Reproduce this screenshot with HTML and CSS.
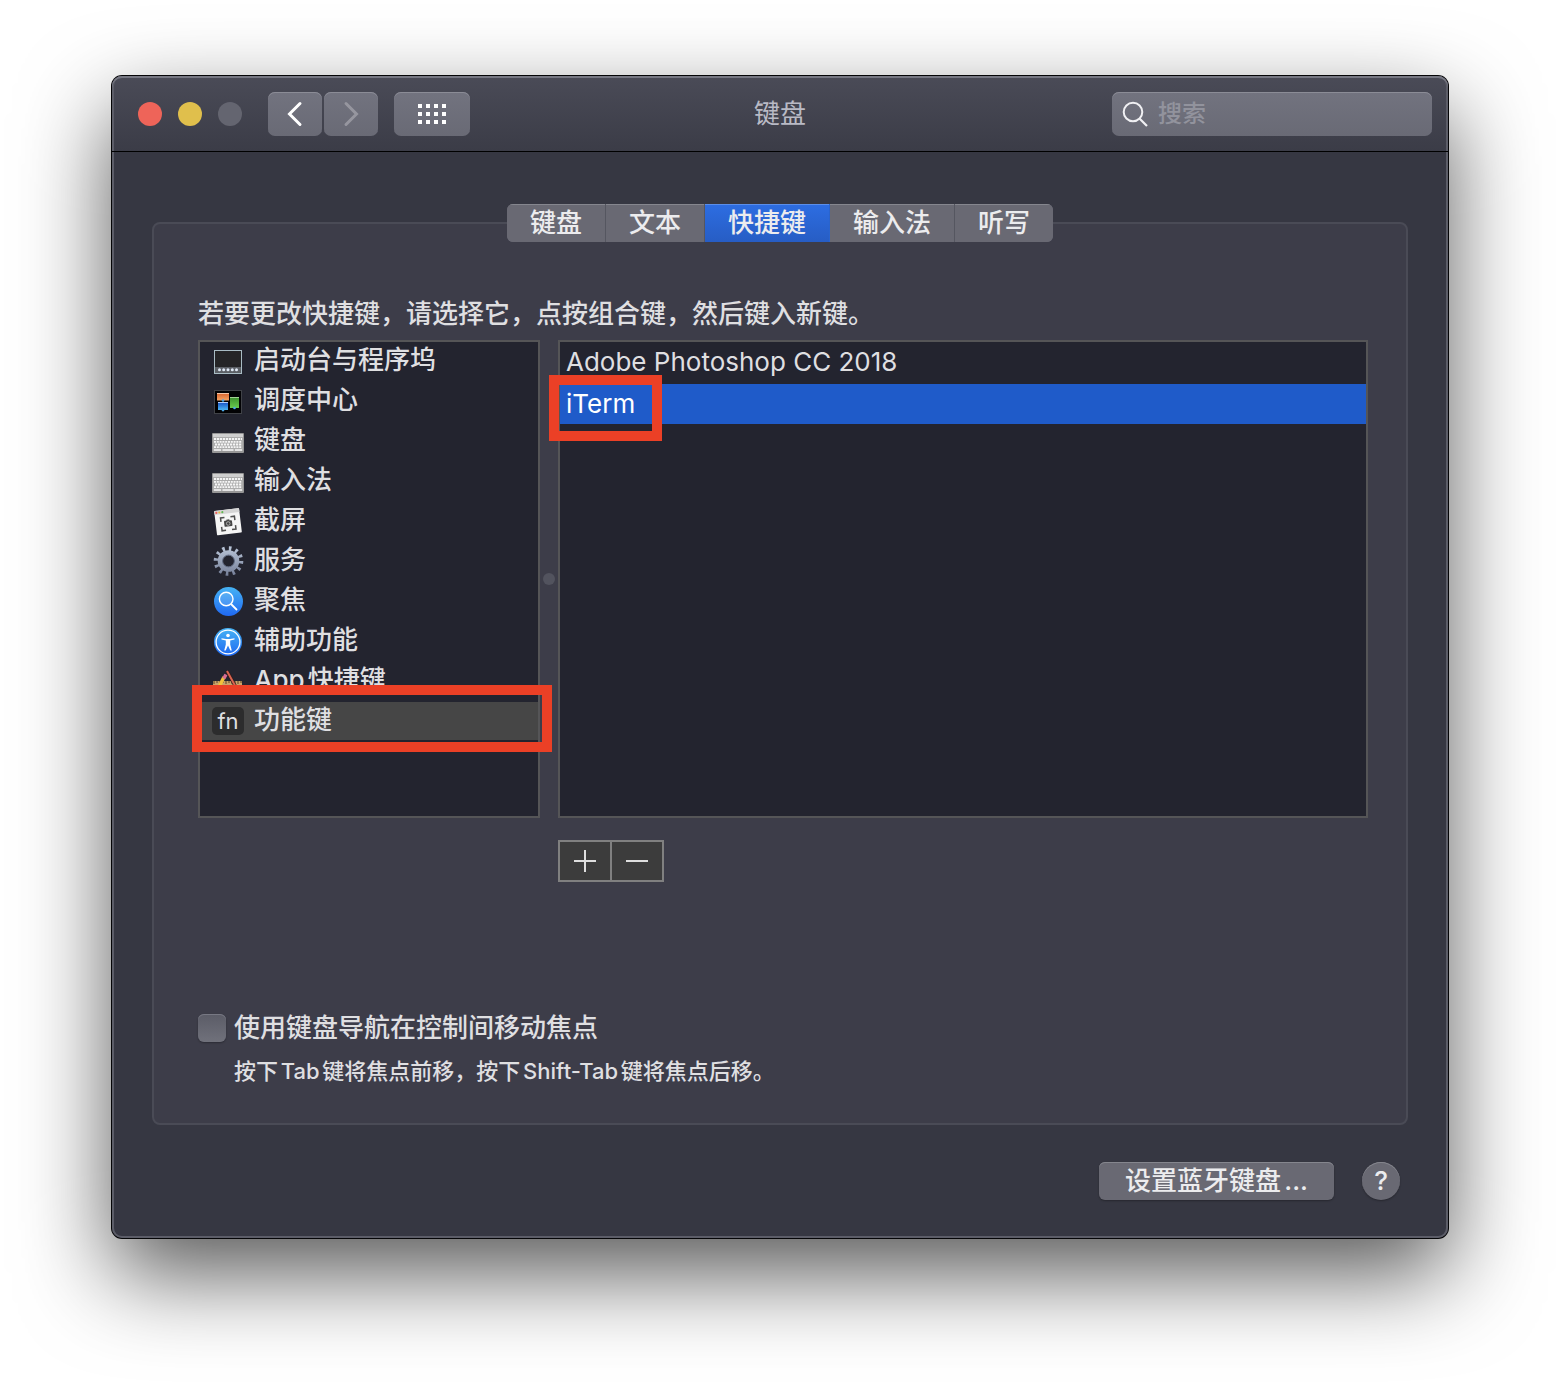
FILE: index.html
```html
<!DOCTYPE html>
<html lang="zh-CN">
<head>
<meta charset="utf-8">
<meta name="viewport" content="width=device-width, initial-scale=1">
<title>键盘</title>
<link rel="stylesheet" href="styles.css">
</head>
<body>
<main class="window">
  <header class="titlebar">
    <div class="titlebar-left">
      <div class="lights">
        <button class="light light-close" aria-label="关闭"></button>
        <button class="light light-min" aria-label="最小化"></button>
        <button class="light light-zoom" aria-label="缩放" disabled></button>
      </div>
      <div class="nav">
        <button class="tool" aria-label="后退"><svg width="54" height="44" viewBox="0 0 54 44"><path d="M32 11.500 21.500 22 32 32.500" fill="none" stroke="#fff" stroke-width="3" stroke-linecap="round"/></svg></button>
        <button class="tool" aria-label="前进" disabled><svg width="54" height="44" viewBox="0 0 54 44"><path d="M22 11.500 32.500 22 22 32.500" fill="none" stroke="#96969f" stroke-width="3" stroke-linecap="round"/></svg></button>
      </div>
      <button class="tool" aria-label="显示全部"><svg width="76" height="44" viewBox="0 0 76 44"><path d="M24 14H52M24 22H52M24 30H52" stroke="#fff" stroke-width="4" stroke-dasharray="4 4"/></svg></button>
    </div>
    <h1 class="title">键盘</h1>
    <label class="search">
      <svg width="28" height="28" viewBox="0 0 28 28"><circle cx="11" cy="12" r="9.300" fill="none" stroke="#f0f0f3" stroke-width="2"/><path d="M17.500 18.500 25 26" stroke="#f0f0f3" stroke-width="2.200"/></svg>
      <input type="search" placeholder="搜索" aria-label="搜索">
    </label>
  </header>

  <div class="content">
    <div class="tabs" role="tablist">
      <button class="tab" role="tab">键盘</button>
      <button class="tab" role="tab">文本</button>
      <button class="tab tab-active" role="tab" aria-selected="true">快捷键</button>
      <button class="tab" role="tab">输入法</button>
      <button class="tab" role="tab">听写</button>
    </div>

    <section class="panel">
      <p class="prompt">若要更改快捷键，请选择它，点按组合键，然后键入新键。</p>
      <div class="split">
        <ul class="list categories">
          <li><button class="row">
            <svg class="icon" viewBox="0 0 32 32"><rect x="2.500" y="5.500" width="27" height="23" fill="#252527" stroke="#a9bcc4"/><path d="M3 22h26v6H3z" fill="#5c6066"/><g fill="#dfe8f5"><circle cx="7.500" cy="24.700" r="1.500"/><circle cx="11.700" cy="24.700" r="1.500"/><circle cx="16" cy="24.700" r="1.500"/><circle cx="20.300" cy="24.700" r="1.500"/><circle cx="24.500" cy="24.700" r="1.500"/></g></svg>
            <span>启动台与程序坞</span></button></li>
          <li><button class="row">
            <svg class="icon" viewBox="0 0 32 32"><defs><linearGradient id="or" x2="0" y2="1"><stop stop-color="#d9622c"/><stop offset="1" stop-color="#f5a565"/></linearGradient><linearGradient id="gr" x2="0" y2="1"><stop stop-color="#3b8e2c"/><stop offset="1" stop-color="#68c74d"/></linearGradient><linearGradient id="bl" x2="0" y2="1"><stop stop-color="#174ec4"/><stop offset="1" stop-color="#4ab5f5"/></linearGradient></defs><rect x="2.500" y="5.500" width="27" height="23" fill="#020204" stroke="#404247"/><path d="M5 8h12v7.500H5z" fill="url(#or)"/><path d="M5 8h12v1H5z" fill="#f5c7a8"/><path d="M18 12h9v11h-9z" fill="url(#gr)"/><path d="M18 12h9v1h-9z" fill="#a2d495"/><path d="M6 17h10v8H6z" fill="url(#bl)"/><path d="M6 17h10v1H6z" fill="#b4cffa"/><g fill="#4aa7e8"><circle cx="11" cy="15.500" r="1.300"/><circle cx="22.500" cy="23" r="1.300"/><circle cx="11" cy="25" r="1.400"/></g></svg>
            <span>调度中心</span></button></li>
          <li><button class="row">
            <svg class="icon" viewBox="0 0 32 32"><defs><g id="kb"><rect y="8" width="32" height="20" rx="1" fill="#969696"/><path d="M1 9h30v17H1z" fill="#acacac"/><path d="M1 9h30v3H1z" fill="#cfcfcf"/><path d="M2 14H30M3 19.500H30" stroke="#f5f5f5" stroke-width="1.800" stroke-dasharray="2.200 .8"/><path d="M2 16.800H30M2 22.200H30" stroke="#f5f5f5" stroke-width="1.800" stroke-dasharray="2 .8"/><path d="M2 25h7M10.500 25h11M23 25h7" stroke="#f5f5f5" stroke-width="1.600"/></g></defs><use href="#kb"/></svg>
            <span>键盘</span></button></li>
          <li><button class="row">
            <svg class="icon" viewBox="0 0 32 32"><use href="#kb"/></svg>
            <span>输入法</span></button></li>
          <li><button class="row">
            <svg class="icon" viewBox="0 0 32 32"><g transform="rotate(-7 16 16.500)"><rect x="3.500" y="4.500" width="25" height="24.500" rx="1" fill="#f5f5f5"/><path d="M3.500 4.500h25v4h-25z" fill="#d5d5d5"/><circle cx="5.500" cy="6.500" r="1.100" fill="#ee6058"/><circle cx="8.500" cy="6.500" r="1.100" fill="#e7bd43"/><circle cx="11.500" cy="6.500" r="1.100" fill="#61b852"/><path d="M9 16v-4h4M19 12h4v4M23 21v4h-4M13 25H9v-4" fill="none" stroke="#505050" stroke-width="1.500"/><rect x="12" y="15.500" width="8" height="6" rx="1" fill="#454545"/><path d="M14.500 14.500h3v2h-3z" fill="#454545"/><circle cx="16" cy="18.500" r="1.800" fill="none" stroke="#bbb" stroke-width=".8"/></g></svg>
            <span>截屏</span></button></li>
          <li><button class="row">
            <svg class="icon" viewBox="0 0 32 32"><defs><linearGradient id="ge" gradientUnits="userSpaceOnUse" x1="0" y1="2" x2="0" y2="30"><stop stop-color="#b9c5d8"/><stop offset="1" stop-color="#77819a"/></linearGradient></defs><g fill="none" stroke="url(#ge)"><circle cx="16.500" cy="16" r="8.300" stroke-width="5"/><circle cx="16.500" cy="16" r="12.300" stroke-width="5" stroke-dasharray="2.500 3.940"/></g><circle cx="16.500" cy="16" r="5.900" fill="none" stroke="#5e6880" stroke-width="1"/></svg>
            <span>服务</span></button></li>
          <li><button class="row">
            <svg class="icon" viewBox="0 0 32 32"><defs><linearGradient id="sp" x2="0" y2="1"><stop stop-color="#46b3f4"/><stop offset="1" stop-color="#2069f2"/></linearGradient></defs><circle cx="16.500" cy="16.500" r="14.500" fill="url(#sp)"/><circle cx="14.200" cy="14" r="6.800" fill="#ffffff22" stroke="#fff" stroke-width="1.400"/><path d="m19 19 6 6" stroke="#fff" stroke-width="1.800"/></svg>
            <span>聚焦</span></button></li>
          <li><button class="row">
            <svg class="icon" viewBox="0 0 32 32"><circle cx="16" cy="17" r="14" fill="url(#sp)"/><circle cx="16" cy="17" r="11.900" fill="none" stroke="#fff" stroke-width="1.300"/><circle cx="16" cy="10.500" r="1.800" fill="#fff"/><path d="M9.500 13.200 14 14h4l4.500-.8v1.300l-4.300 1v4l1.600 6h-1.500L16 20.500l-2.300 5h-1.500l1.600-6v-4l-4.300-1z" fill="#fff"/></svg>
            <span>辅助功能</span></button></li>
          <li><button class="row">
            <svg class="icon" viewBox="0 0 32 32"><path d="M1 16h29v8H1z" fill="#c9a36b"/><path d="M2 16v3m3-3v2m3-2v3m3-3v2m3-2v3m3-3v2m3-2v3m3-3v2m3-2v3m3-3v2" stroke="#5d4526"/><path d="M12 12 4 28" stroke="#f1c13c" stroke-width="3.500"/><path d="m14 9.500-2.200 4" stroke="#d86b93" stroke-width="3.500"/><path d="m15 6 11 20" stroke="#30191a" stroke-width="3.500"/><path d="m15 6 11 20" stroke="#d96550" stroke-width="2"/></svg>
            <span>App快捷键</span></button></li>
          <li class="marked"><button class="row row-current">
            <span class="icon fn">fn</span>
            <span>功能键</span></button><span class="mark mark-category"></span></li>
        </ul>
        <div class="splitter" role="separator" aria-orientation="vertical"></div>
        <div class="detail">
          <ul class="list apps">
            <li><button class="row">Adobe Photoshop CC 2018</button></li>
            <li class="marked"><button class="row row-selected">iTerm</button><span class="mark mark-app"></span></li>
          </ul>
          <div class="edit">
            <button aria-label="添加"><svg width="50" height="38" viewBox="0 0 50 38"><path d="M14 19h22M25 8v22" stroke="#dedede" stroke-width="2"/></svg></button>
            <button aria-label="移除"><svg width="50" height="38" viewBox="0 0 50 38"><path d="M14 19h22" stroke="#dedede" stroke-width="2"/></svg></button>
          </div>
        </div>
      </div>
      <div class="option">
        <input type="checkbox" id="kbnav" aria-describedby="kbnav-help">
        <label for="kbnav">使用键盘导航在控制间移动焦点</label>
        <p id="kbnav-help">按下Tab键将焦点前移，按下Shift-Tab键将焦点后移。</p>
      </div>
    </section>

    <footer class="footer">
      <button class="push">设置蓝牙键盘...</button>
      <button class="help" aria-label="帮助">?</button>
    </footer>
  </div>
</main>
</body>
</html>
```
FILE: styles.css
```css
* {
  box-sizing: border-box;
}

body {
  margin: 0;
  padding: 76px 112px 148px;
  background: #fff;
  color: #dfdfe1;
  font: 500 26px/38px Inter, "Noto Sans CJK SC", sans-serif;
  text-autospace: normal;
}

button,
input {
  margin: 0;
  padding: 0;
  border: 0;
  color: inherit;
  font: inherit;
}

svg {
  display: block;
}

h1,
p,
ul {
  margin: 0;
  padding: 0;
}

.window {
  border-radius: 10px;
  background: #363742;
  box-shadow: inset 0 0 0 2px #5c5d68, 0 0 0 1px #050507, 0 36px 90px rgba(0, 0, 0, .66);
}

/* Title bar */

.titlebar {
  display: grid;
  grid-template-columns: 1fr auto 1fr;
  align-items: center;
  height: 76px;
  padding: 0 16px;
  border-bottom: 1px solid #000;
  border-radius: 10px 10px 0 0;
  background: linear-gradient(#4a4b57, #3b3c47);
  box-shadow: inset 0 2px #777883, inset 2px 0 #5c5d68, inset -2px 0 #5c5d68;
}

.titlebar-left,
.lights,
.nav {
  display: flex;
  align-items: center;
}

.titlebar-left {
  gap: 16px;
}

.lights {
  gap: 16px;
  margin: 0 10px;
}

.nav {
  gap: 2px;
}

.light {
  width: 24px;
  height: 24px;
  border-radius: 50%;
}

.light-close {
  background: #ee6459;
}

.light-min {
  background: #e0bf4c;
}

.light-zoom {
  background: #646570;
}

.tool,
.search {
  border-radius: 7px;
  background: linear-gradient(#72737f, #696a75);
  box-shadow: inset 0 1px #8b8c96;
}

.title {
  color: #b9bac5;
  font-size: 26px;
  font-weight: 400;
  line-height: 40px;
}

.search {
  display: flex;
  align-items: center;
  justify-self: end;
  gap: 8px;
  width: 320px;
  height: 44px;
  padding: 0 10px;
}

.search input {
  flex: 1;
  min-width: 0;
  height: 38px;
  background: none;
  font-size: 24px;
  outline: 0;
}

.search input::placeholder {
  color: #92939d;
  opacity: 1;
}

/* Tabs */

.content {
  padding: 52px 40px 38px;
}

.tabs {
  position: relative;
  display: flex;
  width: fit-content;
  margin: 0 auto -20px;
  border-radius: 6px;
  overflow: hidden;
  background: #696973;
}

.tab {
  height: 38px;
  padding: 0 23px;
  border-right: 1px solid #555660;
  background: #696973;
  box-shadow: inset 0 1px #85868e;
  color: #ececee;
  line-height: 36px;
}

.tab:last-child {
  border-right: 0;
}

.tab-active {
  border-color: #2a64cd;
  background: linear-gradient(#2d6de2, #275dc4);
  box-shadow: inset 0 1px #5b8ee9;
}

/* Panel */

.panel {
  padding: 68px 38px 33px 44px;
  border: 2px solid #4a4b56;
  border-radius: 8px;
  background: #3d3d49;
}

.prompt {
  margin-bottom: 4px;
  line-height: 44px;
}

.split {
  display: grid;
  grid-template-columns: 342px 18px 1fr;
}

.list {
  display: flex;
  flex-direction: column;
  gap: 2px;
  min-height: 478px;
  border: 2px solid #555557;
  background: #23242f;
  list-style: none;
}

.categories {
  align-self: start;
}

.row {
  display: flex;
  align-items: center;
  width: 100%;
  height: 38px;
  background: none;
  text-align: left;
  white-space: nowrap;
}

.categories .row {
  gap: 10px;
  padding-left: 12px;
  line-height: 36px;
}

.categories .row > span:last-child {
  height: 38px;
}

.apps .row {
  height: 40px;
  padding-left: 6px;
  font-weight: 400;
}

.icon {
  flex: none;
  width: 32px;
  height: 32px;
}

.fn {
  height: 28px;
  border-radius: 5px;
  background: #2c2c2d;
  font-size: 22px;
  font-weight: 400;
  line-height: 28px;
  text-align: center;
}

.categories .row-current {
  background: #464646;
}

.row-selected {
  background: #1f5bc9;
  color: #fff;
}

.splitter {
  align-self: start;
  justify-self: center;
  width: 12px;
  height: 12px;
  margin-top: 233px;
  border-radius: 50%;
  background: #52535e;
}

/* Red frames around the rows to pick */

.marked {
  position: relative;
}

.mark {
  position: absolute;
  border: 10px solid #eb4026;
  pointer-events: none;
}

.mark-category {
  inset: -17px -14px -12px -8px;
}

.mark-app {
  top: -9px;
  left: -11px;
  width: 113px;
  height: 66px;
}

.edit {
  display: flex;
  gap: 2px;
  width: fit-content;
  margin-top: 22px;
  border: 2px solid #808080;
  background: #808080;
}

.edit button {
  background: #3c3c3c;
}

.option {
  display: grid;
  grid-template-columns: 28px 1fr;
  align-items: center;
  gap: 4px 8px;
  margin-top: 126px;
}

.option input {
  width: 28px;
  height: 28px;
  border-radius: 6px;
  appearance: none;
  background: linear-gradient(#5b5c67, #70717b);
  box-shadow: 0 1px 2px rgba(0, 0, 0, .3), inset 0 1px #777883;
}

.option label {
  line-height: 40px;
}

.option p {
  grid-column: 2;
  font-size: 22px;
}

/* Footer */

.footer {
  display: flex;
  justify-content: flex-end;
  gap: 28px;
  margin-top: 37px;
  padding-right: 8px;
}

.push,
.help {
  height: 38px;
  background: #696973;
  box-shadow: inset 0 1px #85868e, 0 1px 2px rgba(0, 0, 0, .3);
  color: #ececee;
}

.push {
  padding: 0 26px;
  border-radius: 6px;
  line-height: 36px;
}

.help {
  width: 38px;
  border-radius: 50%;
}
```
